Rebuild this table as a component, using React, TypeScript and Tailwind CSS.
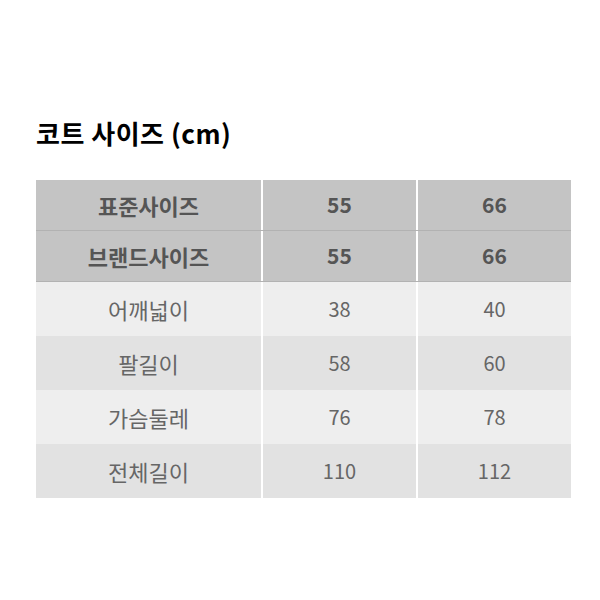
import React from "react";

const font = { fontFamily: '"Noto Sans CJK KR", "Noto Sans", sans-serif' };

const headers = [
  ["표준사이즈", "55", "66"],
  ["브랜드사이즈", "55", "66"],
];

const rows = [
  ["어깨넓이", "38", "40"],
  ["팔길이", "58", "60"],
  ["가슴둘레", "76", "78"],
  ["전체길이", "110", "112"],
];

export default function App() {
  return (
    <div className="w-[600px] h-[600px] bg-white pt-[114px] pl-[36px]" style={font}>
      <h1 className="text-[26px] font-bold text-black leading-[38px] tracking-[0.5px]">코트 사이즈 (cm)</h1>
      <div className="mt-[28px] w-[535px] flex flex-col">
        {headers.map((r, i) => (
          <div
            key={i}
            className="grid grid-cols-[225px_153px_153px] gap-x-[2px] h-[51px] border-b border-[#b2b2b2]"
          >
            {r.map((c, j) => (
              <div
                key={j}
                className={`bg-[#c4c4c4] flex items-center justify-center ${j === 0 ? "text-[22px]" : "text-[21px]"} font-bold text-[#555555]`}
              >
                {c}
              </div>
            ))}
          </div>
        ))}
        {rows.map((r, i) => (
          <div key={i} className="grid grid-cols-[225px_153px_153px] gap-x-[2px] h-[54px]">
            {r.map((c, j) => (
              <div
                key={j}
                className={`${i % 2 === 0 ? "bg-[#eeeeee]" : "bg-[#e2e2e2]"} flex items-center justify-center ${j === 0 ? "text-[22px]" : "text-[20px]"} text-[#666666]`}
              >
                {c}
              </div>
            ))}
          </div>
        ))}
      </div>
    </div>
  );
}
